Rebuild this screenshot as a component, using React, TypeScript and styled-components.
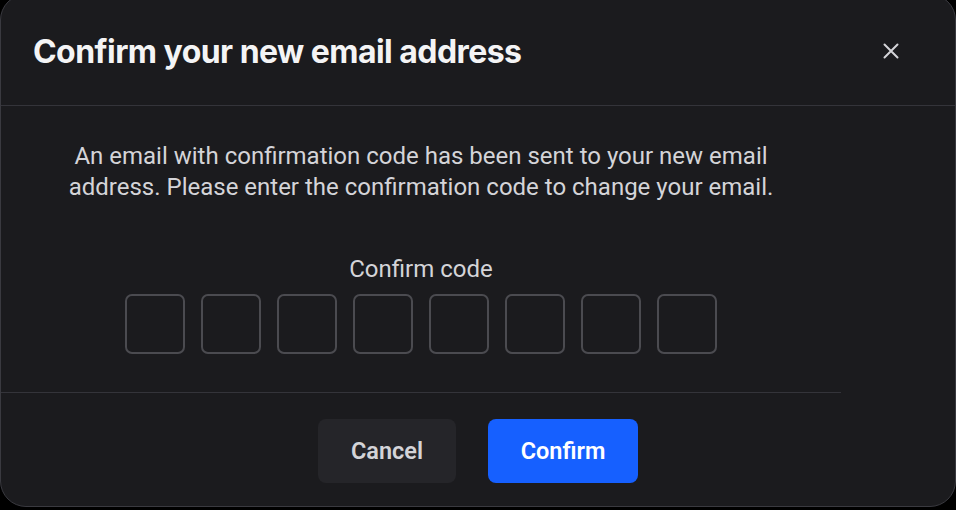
import React from "react";
import styled, { createGlobalStyle } from "styled-components";

const GlobalStyle = createGlobalStyle`
  html, body {
    margin: 0;
    padding: 0;
    background: #000;
    overflow: hidden;
  }
  * { box-sizing: border-box; }
`;

const Dialog = styled.div`
  width: 956px;
  height: 513px;
  margin-top: -6px;
  background: #1b1b1e;
  border: 1.5px solid #3a3a40;
  border-radius: 26px;
  display: flex;
  flex-direction: column;
  overflow: hidden;
`;

const Header = styled.div`
  height: 111px;
  flex: none;
  padding: 2px 52px 0 32px;
  display: flex;
  align-items: center;
  justify-content: space-between;
  border-bottom: 1.5px solid #34343a;
`;

const Title = styled.h2`
  margin: 0;
  font-family: Inter, "Noto Sans", sans-serif;
  font-weight: 700;
  font-size: 32px;
  letter-spacing: -0.55px;
  color: #f4f4f5;
`;

const CloseButton = styled.button`
  width: 24px;
  height: 24px;
  padding: 0;
  border: 0;
  background: transparent;
  color: #d4d4d8;
  display: flex;
  align-items: center;
  justify-content: center;
  cursor: pointer;
`;

const Body = styled.div`
  width: 840px;
  padding: 35px 0 38px;
  display: flex;
  flex-direction: column;
  align-items: center;
  border-bottom: 1.5px solid #34343a;
`;

const Description = styled.p`
  margin: 0;
  width: 720px;
  text-align: center;
  font-family: Roboto, "Liberation Sans", sans-serif;
  font-size: 24px;
  line-height: 31px;
  color: #d4d4d8;
`;

const Label = styled.div`
  margin-top: 51px;
  font-family: Roboto, "Liberation Sans", sans-serif;
  font-size: 24px;
  line-height: 31px;
  color: #d4d4d8;
`;

const CodeRow = styled.div`
  margin-top: 9px;
  display: flex;
  gap: 16px;
`;

const CodeBox = styled.input`
  width: 60px;
  height: 60px;
  border: 2px solid #4b4b50;
  border-radius: 7px;
  background: transparent;
  color: #f4f4f5;
  font-family: Roboto, sans-serif;
  font-size: 24px;
  text-align: center;
  outline: none;
`;

const Footer = styled.div`
  flex: 1;
  display: flex;
  justify-content: center;
  align-items: flex-start;
  padding-top: 26px;
  gap: 32px;
`;

const Button = styled.button<{ $primary?: boolean }>`
  height: 64px;
  padding: 0 32px;
  min-width: ${(p) => (p.$primary ? "150px" : "138px")};
  border: 0;
  border-radius: 8px;
  background: ${(p) => (p.$primary ? "#1660ff" : "#252529")};
  color: ${(p) => (p.$primary ? "#ffffff" : "#d4d4d8")};
  font-family: Roboto, "Liberation Sans", sans-serif;
  font-weight: 600;
  font-size: 23.5px;
  cursor: pointer;
`;

export default function App() {
  return (
    <>
      <GlobalStyle />
      <Dialog>
        <Header>
          <Title>Confirm your new email address</Title>
          <CloseButton aria-label="Close">
            <svg width="16" height="16" viewBox="0 0 16 16" fill="none">
              <path d="M1.5 1.5L14.5 14.5M14.5 1.5L1.5 14.5" stroke="currentColor" strokeWidth="2" strokeLinecap="round" />
            </svg>
          </CloseButton>
        </Header>
        <Body>
          <Description>
            An email with confirmation code has been sent to your new email address. Please enter the confirmation code to change your email.
          </Description>
          <Label>Confirm code</Label>
          <CodeRow>
            {Array.from({ length: 8 }).map((_, i) => (
              <CodeBox key={i} maxLength={1} />
            ))}
          </CodeRow>
        </Body>
        <Footer>
          <Button>Cancel</Button>
          <Button $primary>Confirm</Button>
        </Footer>
      </Dialog>
    </>
  );
}
